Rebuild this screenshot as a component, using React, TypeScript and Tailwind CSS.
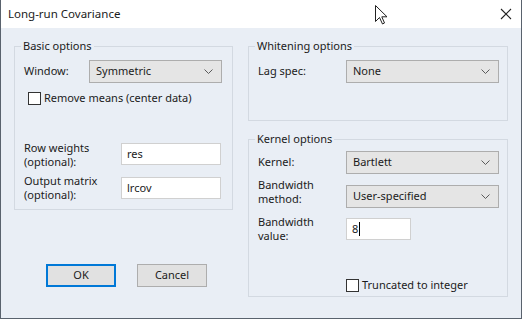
import React from "react";

const ui = "font-['Noto_Sans',sans-serif] text-[11px] text-[#1b1b1b]";

function Select({ value, className = "" }: { value: string; className?: string }) {
  return (
    <div
      className={`flex h-[23px] items-center justify-between border border-[#adadad] bg-[#e5e5e5] pl-[6px] pr-[8px] ${className}`}
    >
      <span>{value}</span>
      <svg width="9" height="5" viewBox="0 0 9 5">
        <polyline points="0.5,0.5 4.5,4.5 8.5,0.5" fill="none" stroke="#5a5a5a" strokeWidth="1" />
      </svg>
    </div>
  );
}

function Field({ value, className = "", caret }: { value: string; className?: string; caret?: boolean }) {
  return (
    <div className={`flex h-[22px] items-center border border-[#d0d0d0] bg-white pl-[5px] ${className}`}>
      <span>{value}</span>
      {caret && <span className="ml-px h-[14px] w-px bg-black" />}
    </div>
  );
}

function Check({ label, className = "" }: { label: string; className?: string }) {
  return (
    <div className={`flex h-[14px] items-center gap-[3px] ${className}`}>
      <span className="h-[13px] w-[13px] border border-[#333] bg-white" />
      <span>{label}</span>
    </div>
  );
}

// two-line label, e.g. "Row weights / (optional):"
function Label2({ a, b, className = "" }: { a: string; b: string; className?: string }) {
  return (
    <div className={`flex flex-col leading-[14px] ${className}`}>
      <span>{a}</span>
      <span>{b}</span>
    </div>
  );
}

function Group({
  title,
  className = "",
  children,
}: {
  title: string;
  className?: string;
  children: React.ReactNode;
}) {
  return (
    <fieldset className={`border border-[#d3d9e1] pl-[9px] ${className}`}>
      <legend className="ml-[-3px] px-[2px] leading-[16px]">{title}</legend>
      {children}
    </fieldset>
  );
}

export default function App() {
  return (
    <div className={`relative h-[320px] w-[524px] bg-white ${ui}`}>
      <div className="flex h-[319px] w-[522px] flex-col border-x border-b border-[#59626d] bg-[#e9eef5]">
        {/* title bar */}
        <div className="flex h-[28px] items-center justify-between bg-white pl-[7px] pr-[9px]">
          <span className="text-[11.5px]">Long-run Covariance</span>
          <svg width="12" height="12" viewBox="0 0 12 12">
            <path d="M1 1 L11 11 M11 1 L1 11" stroke="#222" strokeWidth="1.1" />
          </svg>
        </div>

        <div className="flex gap-[15px] pl-[13px] pt-[10px]">
          {/* left column */}
          <div className="flex w-[219px] flex-col">
            <Group title="Basic options" className="h-[172px]">
              <div className="mt-[6px] flex items-center">
                <span className="w-[65px]">Window:</span>
                <Select value="Symmetric" className="w-[133px]" />
              </div>
              <Check label="Remove means (center data)" className="ml-[4px] mt-[8px]" />
              <div className="mt-[36px] flex h-[28px] items-start">
                <Label2 a="Row weights" b="(optional):" className="w-[97px]" />
                <Field value="res" className="mt-[2px] w-[100px]" />
              </div>
              <div className="mt-[5px] flex h-[28px] items-start">
                <Label2 a="Output matrix" b="(optional):" className="w-[97px]" />
                <Field value="lrcov" className="mt-[3px] w-[100px]" />
              </div>
            </Group>

            <div className="ml-[32px] mt-[54px] flex gap-[21px]">
              <button className="flex h-[23px] w-[70px] items-center justify-center border-2 border-[#0078d7] bg-[#e1e1e1]">
                OK
              </button>
              <button className="flex h-[23px] w-[70px] items-center justify-center border border-[#adadad] bg-[#e1e1e1]">
                Cancel
              </button>
            </div>
          </div>

          {/* right column */}
          <div className="flex w-[260px] flex-col">
            <Group title="Whitening options" className="h-[83px]">
              <div className="mt-[6px] flex items-center">
                <span className="w-[88px]">Lag spec:</span>
                <Select value="None" className="w-[153px]" />
              </div>
            </Group>

            <Group title="Kernel options" className="mt-[10px] h-[166px]">
              <div className="mt-[4px] flex items-center">
                <span className="w-[88px]">Kernel:</span>
                <Select value="Bartlett" className="w-[153px]" />
              </div>
              <div className="mt-[4px] flex h-[30px] items-start">
                <Label2 a="Bandwidth" b="method:" className="w-[88px]" />
                <Select value="User-specified" className="mt-[7px] w-[153px]" />
              </div>
              <div className="mt-[7px] flex h-[28px] items-start">
                <Label2 a="Bandwidth" b="value:" className="w-[88px]" />
                <Field value="8" caret className="mt-[3px] w-[65px]" />
              </div>
              <Check label="Truncated to integer" className="ml-[88px] mt-[35px]" />
            </Group>
          </div>
        </div>
      </div>

      {/* mouse pointer */}
      <svg className="absolute left-[375px] top-[5px]" width="13" height="20" viewBox="0 0 13 20">
        <path
          d="M0.5 0.5 L0.5 16.5 L4.5 12.5 L7.5 19 L9.5 18 L6.8 11.8 L12 11.8 Z"
          fill="white"
          stroke="#222"
          strokeWidth="1"
          strokeLinejoin="round"
        />
      </svg>
    </div>
  );
}
